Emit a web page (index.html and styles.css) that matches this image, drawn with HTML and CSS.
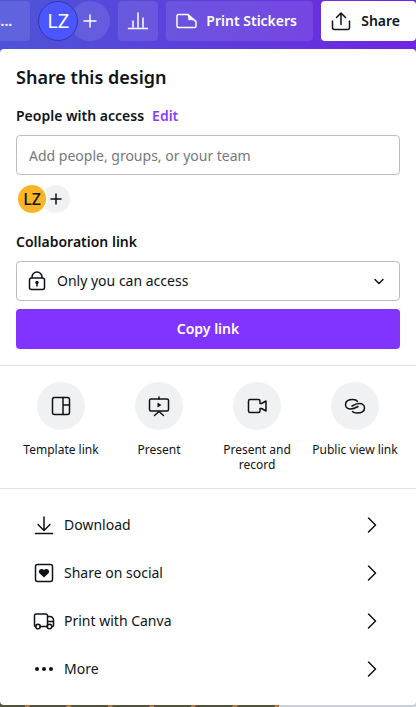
FILE: index.html
```html
<!DOCTYPE html>
<html lang="en">
<head>
  <meta charset="UTF-8">
  <meta name="viewport" content="width=device-width, initial-scale=1">
  <title>Share this design</title>
  <link rel="stylesheet" href="styles.css">
</head>
<body>
  <header class="topbar">
    <button class="bar-button title-button">n...</button>
    <div class="members">
      <button class="member">LZ</button>
      <button class="member-add" aria-label="Add member">
        <svg width="24" height="24" viewBox="0 0 24 24"><path d="M12 6v12M6 12h12"/></svg>
      </button>
    </div>
    <button class="bar-button chart-button" aria-label="Insights">
      <svg width="24" height="24" viewBox="0 0 24 24"><path d="M2.500 19.500h19M7 18v-6M12 18V4M17 18V9"/></svg>
    </button>
    <button class="bar-button print-button">
      <svg width="24" height="24" viewBox="0 0 24 24"><path d="M14 5.500H4.500A1.500 1.500 0 0 0 3 7v10a1.500 1.500 0 0 0 1.500 1.500h16A1.500 1.500 0 0 0 22 17v-4.500zM14 5.500c1 1.500 1.500 2.500 1 5 3-.5 5.500 0 7 2"/><path class="fill" d="M14 5.500l8 7c-1.500-2-4-2.500-7-2 .5-2.500 0-3.500-1-5z"/></svg>
      Print Stickers
    </button>
    <button class="bar-button share-button">
      <svg width="24" height="24" viewBox="0 0 24 24"><path d="M3.500 12v6.500A2 2 0 0 0 5.500 20.500h13a2 2 0 0 0 2-2V12M12 15.500V4M7.500 8.500L12 4l4.500 4.500"/></svg>
      Share
    </button>
  </header>

  <main class="panel">
    <section class="access">
      <h1>Share this design</h1>
      <div class="label-row">
        <label for="people">People with access</label>
        <a href="#edit">Edit</a>
      </div>
      <input class="field" id="people" type="text" placeholder="Add people, groups, or your team">
      <div class="people">
        <span class="person">LZ</span>
        <button class="person-add" aria-label="Add person">
          <svg width="16" height="16" viewBox="0 0 16 16"><path d="M8 3v10M3 8h10"/></svg>
        </button>
      </div>
      <div class="label-row">
        <label for="link-access">Collaboration link</label>
      </div>
      <div class="select-wrap">
        <svg class="lock" width="24" height="24" viewBox="0 0 24 24"><rect x="4.500" y="9" width="15" height="11.500" rx="2"/><path d="M7 8.500V8a5 5 0 0 1 10 0v.5M12 14v3"/><circle class="fill" cx="12" cy="13.500" r="1.700"/></svg>
        <select class="field" id="link-access">
          <option>Only you can access</option>
          <option>Anyone with the link</option>
        </select>
        <svg class="arrow" width="16" height="16" viewBox="0 0 16 16"><path d="M4 6.500l4 4 4-4"/></svg>
      </div>
      <button class="copy-button">Copy link</button>
    </section>

    <section class="shortcuts">
      <button class="shortcut">
        <span class="circle"><svg width="24" height="24" viewBox="0 0 24 24"><rect x="3.500" y="3.500" width="17" height="17" rx="2"/><path d="M14 3.500v17M14 11h6.500"/></svg></span>
        Template link
      </button>
      <button class="shortcut">
        <span class="circle"><svg width="24" height="24" viewBox="0 0 24 24"><rect x="2.500" y="5" width="19" height="12" rx="1.500"/><path d="M12 3v2M7.500 21.500l4.500-4 4.500 4"/><path class="fill" d="M10.500 8.500v5l4-2.500z"/></svg></span>
        Present
      </button>
      <button class="shortcut">
        <span class="circle"><svg width="24" height="24" viewBox="0 0 24 24"><path d="M5 5.500h8.500A1.500 1.500 0 0 1 15 7v2.500h1.500l4.500-2.500v10l-4.500-2.500H15V17a1.500 1.500 0 0 1-1.500 1.500H5A1.500 1.500 0 0 1 3.500 17V7A1.500 1.500 0 0 1 5 5.500z"/></svg></span>
        Present and record
      </button>
      <button class="shortcut">
        <span class="circle"><svg width="24" height="24" viewBox="0 0 24 24"><path d="M14.500 7.500C13.500 6 12 5.500 10 5.500 6 5.500 2.500 7 2.500 10.500c0 3 2.500 4.500 5 4.500 3 0 5-1 7.500-2.500"/><path d="M9.500 17.500c1 1.200 2.500 1.500 4.500 1.500 4 0 7.500-1.500 7.500-5 0-3-2.500-4.500-5-4.500-3 0-5 1-7.500 2.500"/></svg></span>
        Public view link
      </button>
    </section>

    <nav class="menu">
      <button class="menu-item">
        <svg width="24" height="24" viewBox="0 0 24 24"><path d="M3.500 20.500h17M12 4v13M6 11.500l6 6 6-6"/></svg>
        <span>Download</span>
        <svg width="24" height="24" viewBox="0 0 24 24"><path d="M8.500 5l7 7-7 7"/></svg>
      </button>
      <button class="menu-item">
        <svg width="24" height="24" viewBox="0 0 24 24"><rect x="3.500" y="3.500" width="17" height="17" rx="2"/><path class="fill" d="M12 16.500l-4.500-4.300c-2.300-2.500 1.800-6 4.500-3.200 2.700-2.800 6.800.7 4.500 3.200z"/></svg>
        <span>Share on social</span>
        <svg width="24" height="24" viewBox="0 0 24 24"><path d="M8.500 5l7 7-7 7"/></svg>
      </button>
      <button class="menu-item">
        <svg width="24" height="24" viewBox="0 0 24 24"><path d="M4 17.500h-.5a1 1 0 0 1-1-1V6.500a1.500 1.500 0 0 1 1.500-1.500h10a1.500 1.500 0 0 1 1.500 1.500v11H8M15.500 7.500h2.500a3.500 3.500 0 0 1 3.500 3.500v5.500a1 1 0 0 1-1 1M15.500 12.500h6"/><circle cx="6" cy="17.500" r="2.300"/><circle cx="17.500" cy="17.500" r="2.300"/></svg>
        <span>Print with Canva</span>
        <svg width="24" height="24" viewBox="0 0 24 24"><path d="M8.500 5l7 7-7 7"/></svg>
      </button>
      <button class="menu-item">
        <svg width="24" height="24" viewBox="0 0 24 24"><g class="fill"><circle cx="5" cy="12" r="2"/><circle cx="12" cy="12" r="2"/><circle cx="19" cy="12" r="2"/></g></svg>
        <span>More</span>
        <svg width="24" height="24" viewBox="0 0 24 24"><path d="M8.500 5l7 7-7 7"/></svg>
      </button>
    </nav>
  </main>
  <div class="canvas"></div>
</body>
</html>
```
FILE: styles.css
```css
* {
  box-sizing: border-box;
}

body {
  margin: 0;
  min-height: 100vh;
  display: flex;
  flex-direction: column;
  font-family: "Noto Sans", sans-serif;
  font-size: 14px;
  line-height: 22px;
  color: #0e1318;
  background: linear-gradient(100deg, #4c55d9, #7025e0) top / 100% 56px no-repeat,
    linear-gradient(to right, #50523c 67%, #cdd1da 67%);
}

button {
  font: inherit;
  color: inherit;
  border: none;
  background: none;
  padding: 0;
  cursor: pointer;
}

svg {
  display: block;
  flex: none;
  fill: none;
  stroke: currentColor;
  stroke-width: 1.5;
  stroke-linecap: round;
  stroke-linejoin: round;
}

.fill {
  fill: currentColor;
  stroke: none;
}

.topbar {
  display: flex;
  justify-content: flex-end;
  gap: 8px;
  padding: 1px 0 8px;
  overflow: hidden;
  color: #ffffff;
}

.bar-button {
  display: flex;
  flex: none;
  align-items: center;
  justify-content: center;
  gap: 8px;
  height: 40px;
  padding: 0 16px 0 8px;
  border-radius: 4px;
  font-weight: 600;
  background: rgba(255, 255, 255, 0.1);
}

.title-button {
  padding: 0 18px;
}

.chart-button {
  padding: 0 8px;
}

.print-button {
  min-width: 147px;
}

.share-button {
  color: #0e1318;
  background: #ffffff;
}

.members {
  display: flex;
  flex: none;
}

.member {
  z-index: 1;
  width: 40px;
  height: 40px;
  border: 1px solid #3438a8;
  border-radius: 50%;
  font-size: 20px;
  background: #4a56ff;
}

.member-add {
  display: grid;
  place-items: center;
  width: 40px;
  height: 40px;
  margin-left: -8px;
  border-radius: 50%;
  background: rgba(255, 255, 255, 0.1);
}

.panel {
  border-radius: 4px;
  background: #ffffff;
}

.access {
  padding: 16px;
}

h1 {
  margin: 0 0 16px;
  font-size: 18px;
  font-weight: 600;
  line-height: 24px;
}

.label-row {
  display: flex;
  gap: 8px;
  margin-bottom: 8px;
  font-weight: 600;
}

.label-row a {
  color: #8b3dff;
  text-decoration: none;
}

.field {
  display: block;
  width: 100%;
  height: 40px;
  padding: 0 12px;
  border: 1px solid #babec4;
  border-radius: 4px;
  font: inherit;
  color: inherit;
  background: #ffffff;
}

.field::placeholder {
  color: #75787c;
  opacity: 1;
}

.people {
  display: flex;
  align-items: center;
  margin: 8px 0 16px;
}

.person {
  z-index: 1;
  width: 32px;
  height: 32px;
  border: 2px solid #ffffff;
  border-radius: 50%;
  font-size: 16px;
  font-weight: 500;
  line-height: 28px;
  text-align: center;
  background: #fdb528;
}

.person-add {
  display: grid;
  place-items: center;
  width: 28px;
  height: 28px;
  margin-left: -6px;
  border-radius: 50%;
  background: #f0f1f3;
}

.select-wrap {
  position: relative;
}

.select-wrap select {
  padding-left: 40px;
  appearance: none;
}

.lock {
  position: absolute;
  top: 8px;
  left: 9px;
}

.arrow {
  position: absolute;
  top: 12px;
  right: 13px;
}

.copy-button {
  width: 100%;
  height: 40px;
  margin-top: 8px;
  border-radius: 4px;
  font-weight: 600;
  color: #ffffff;
  background: #8133ff;
}

.shortcuts {
  display: grid;
  grid-template-columns: repeat(4, 1fr);
  padding: 16px 12px;
  border-top: 1px solid #dfe0e2;
  border-bottom: 1px solid #dfe0e2;
}

.shortcut {
  display: flex;
  flex-direction: column;
  align-items: center;
  gap: 12px;
  font-size: 12px;
  line-height: 15px;
}

.circle {
  display: grid;
  place-items: center;
  width: 48px;
  height: 48px;
  border-radius: 50%;
  background: #f0f1f3;
}

.menu {
  padding: 12px 0;
}

.menu-item {
  display: flex;
  align-items: center;
  gap: 8px;
  width: 100%;
  height: 48px;
  padding: 0 32px;
  text-align: left;
}

.menu-item span {
  flex: 1;
}

/* edge of the design showing under the panel */
.canvas {
  flex: 1;
  min-height: 2px;
  background: repeating-linear-gradient(120deg, transparent 0 22px, #ad7743 22px 26px, transparent 26px 36px) left / 67% 100% no-repeat;
}
```
